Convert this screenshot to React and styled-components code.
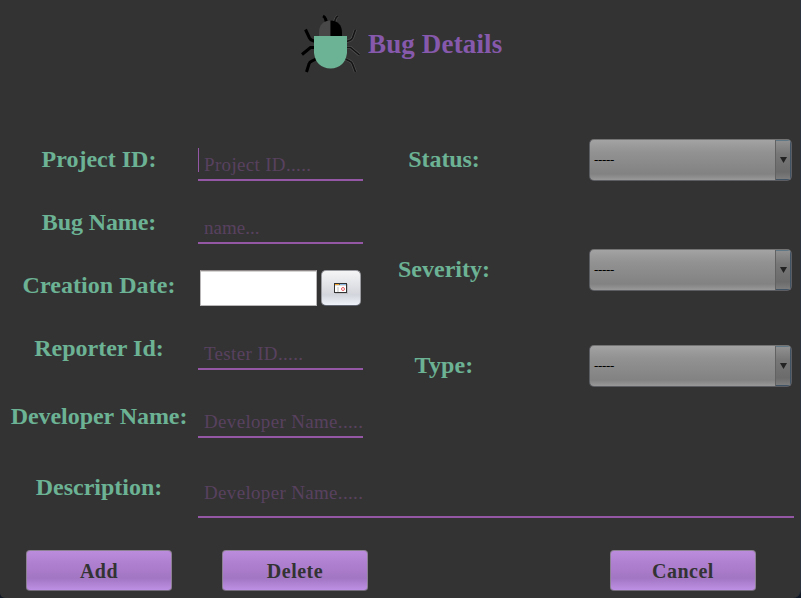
import React from 'react';
import styled, { createGlobalStyle } from 'styled-components';

const Global = createGlobalStyle`
  * { box-sizing: border-box; }
  body { margin: 0; background: #111826; overflow: hidden; }
`;

const Window = styled.main`
  width: 801px;
  height: 598px;
  background: #333333;
  border-right: 1px solid #2b323b;
  border-radius: 0 0 8px 5px;
  font-family: 'Liberation Serif', 'Times New Roman', serif;
  display: flex;
  flex-direction: column;
  overflow: hidden;
`;

const Header = styled.header`
  height: 128px;
  padding: 13px 0 0 300px;
  display: flex;
  align-items: flex-start;
  gap: 7px;
`;

const Title = styled.h1`
  margin: 0;
  padding-left: 1px;
  color: #8659ac;
  font-size: 27px;
  font-weight: bold;
  line-height: 63px;
  letter-spacing: 0.15px;
  white-space: nowrap;
`;

const Columns = styled.div`
  display: grid;
  grid-template-columns: 363px 1fr;
  height: 325px;
`;

const Column = styled.div`
  display: flex;
  flex-direction: column;
`;

const Row = styled.div`
  display: grid;
  grid-template-columns: ${(p) => p.$cols || '198px 165px'};
  column-gap: ${(p) => p.$columnGap || 0}px;
  height: ${(p) => p.$height || 63}px;
  flex: none;
  margin-top: ${(p) => p.$gap || 0}px;
`;

const Label = styled.label`
  color: #6cb294;
  font-size: 24px;
  font-weight: bold;
  line-height: 63px;
  text-align: center;
  white-space: nowrap;
  letter-spacing: ${(p) => p.$track || 0}px;
`;

const Field = styled.div`
  height: ${(p) => p.$height || 33}px;
  margin-top: 20px;
  border-bottom: 2px solid #9457a6;
  display: flex;
  align-items: flex-start;
`;

const Caret = styled.span`
  width: 1px;
  height: 24px;
  margin-right: -1px;
  background: #9457a6;
`;

const Placeholder = styled.span`
  padding-left: 6px;
  color: #58415f;
  font-size: 19px;
  line-height: 33px;
  white-space: nowrap;
  letter-spacing: ${(p) => p.$track ?? 0.33}px;
`;

const DatePicker = styled.div`
  display: flex;
  gap: 4px;
  padding: 16px 0 0 2px;
`;

const DateInput = styled.div`
  width: 117px;
  height: 36px;
  background: #ffffff;
  border: 1px solid #b9b7b7;
  border-top-color: #8f8989;
  box-shadow: inset 0 1px 0 #d6d3d3;
`;

const DateButton = styled.button`
  width: 40px;
  height: 36px;
  padding: 0;
  border: 1px solid #9a9ba1;
  border-bottom-color: #626671;
  border-radius: 5px;
  background: linear-gradient(#f5f5f6 0%, #e2e3e7 40%, #d3d5dc 70%, #f0f2fa 100%);
  display: grid;
  place-items: center;
`;

const Select = styled.div`
  width: 203px;
  height: 42px;
  margin-top: 11px;
  border: 1px solid #5b5d63;
  border-top-color: #747474;
  border-radius: 5px;
  background: linear-gradient(#a3a3a3 0%, #929292 30%, #828282 85%, #999999 100%);
  display: grid;
  grid-template-columns: 1fr 16px;
  overflow: hidden;
`;

const Value = styled.span`
  padding-left: 4px;
  color: #000000;
  font-size: 13px;
  line-height: 40px;
  letter-spacing: -0.33px;
`;

const Arrow = styled.span`
  border-left: 1px solid #626262;
  box-shadow: inset 0 1px 0 #607886, inset -1px -1px 0 #405365;
  background: linear-gradient(#929292 0%, #777777 35%, #6b6b6b 80%, #808080 100%);
  display: grid;
  place-items: center;
`;

const Actions = styled.footer`
  display: flex;
  padding: 28px 0 0 26px;
`;

const ActionButton = styled.button`
  width: 146px;
  height: 41px;
  padding: 2px 0 0;
  margin-left: ${(p) => p.$gap || 0}px;
  border: 1px solid #8c8192;
  border-bottom-color: #716978;
  border-radius: 4px;
  background: linear-gradient(#bb8bdd 0%, #b080d0 30%, #a276c3 70%, #be90e5 100%);
  color: #333333;
  font: bold 20px 'Liberation Serif', 'Times New Roman', serif;
  letter-spacing: 0.5px;
`;

function BugIcon() {
  return (
    <svg width="60" height="62" viewBox="0 0 60 62" aria-hidden="true">
      <g fill="none">
        <path d="M5.500 16.500l4 8.500q1 2 3 2.500l3 1M2 41.500l8.500-7H18M6.500 59l2.500-8q.5-2 3-3l5-2.500M23 3q2 1 2.500 3l1 3" stroke="#000" strokeWidth="3" />
        <path d="M55.500 16.500l-3 8.500q-1 2-3 2.500l-3 1M59.500 42l-9-7.500H43M55.500 59l-3-8q-.5-2-3-3l-5-2.500M38 3q-2 1-2.500 3l-1 3" stroke="#505050" strokeWidth="3" />
        <path d="M55.500 16.500l-3 8.500q-1 2-3 2.500l-3 1M59.500 42l-9-7.500H43M55.500 59l-3-8q-.5-2-3-3l-5-2.500M38 3q-2 1-2.500 3l-1 3" stroke="#141414" strokeWidth="1.600" />
      </g>
      <path d="M19 24v-4Q19 8 30.500 7.500V24Z" fill="#484848" />
      <path d="M30.500 7.500Q42 8 42 20v4H30.500Z" fill="#000" />
      <path d="M14 23h33v17Q45 55 30.500 55.500Q16 55 14 40Z" fill="#6cb294" />
    </svg>
  );
}

function CalendarIcon() {
  return (
    <svg width="14" height="11" viewBox="0 0 14 11" shapeRendering="crispEdges" aria-hidden="true">
      <path d="M1 1h13v10H1z" fill="#bfc0c6" />
      <path d="M0 0h13v10H0z" fill="#333" />
      <path d="M1 1h11v8H1z" fill="#fff" />
      <path d="M1 1h4v1H1z" fill="#f3a52e" />
      <path d="M5 1h1v1H5z" fill="#665" />
      <path d="M6 1h6v1H6z" fill="#8dbbe4" />
      <path d="M1 2h11v1H1zM3 4h2v5H3z" fill="#dedede" />
      <circle cx="9" cy="6" r="1.500" fill="none" stroke="#e45b60" shapeRendering="auto" />
    </svg>
  );
}

function TextField({ caret, track, height, children }) {
  return (
    <Field $height={height}>
      {caret && <Caret />}
      <Placeholder $track={track}>{children}</Placeholder>
    </Field>
  );
}

function Choice({ label, gap, track }) {
  return (
    <Row $cols="162px 203px" $columnGap={64} $gap={gap}>
      <Label $track={track}>{label}</Label>
      <Select>
        <Value>-----</Value>
        <Arrow>
          <svg width="7" height="6" viewBox="0 0 7 6"><path d="M0 0h7L3.500 6z" fill="#222" /></svg>
        </Arrow>
      </Select>
    </Row>
  );
}

export default function App() {
  return (
    <>
      <Global />
      <Window>
        <Header>
          <BugIcon />
          <Title>Bug Details</Title>
        </Header>
        <Columns>
          <Column>
            <Row><Label>Project ID:</Label><TextField caret>Project ID.....</TextField></Row>
            <Row><Label $track={-0.1}>Bug Name:</Label><TextField track={0}>name...</TextField></Row>
            <Row>
              <Label $track={0.05}>Creation Date:</Label>
              <DatePicker>
                <DateInput />
                <DateButton aria-label="Choose date"><CalendarIcon /></DateButton>
              </DatePicker>
            </Row>
            <Row><Label>Reporter Id:</Label><TextField>Tester ID.....</TextField></Row>
            <Row $gap={5}><Label $track={-0.05}>Developer Name:</Label><TextField>Developer Name.....</TextField></Row>
          </Column>
          <Column>
            <Choice label="Status:" track={-0.1} />
            <Choice label="Severity:" gap={47} />
            <Choice label="Type:" gap={33} track={0.15} />
          </Column>
        </Columns>
        <Row $cols="198px 596px" $height={66} $gap={3}>
          <Label>Description:</Label>
          <TextField height={42}>Developer Name.....</TextField>
        </Row>
        <Actions>
          <ActionButton>Add</ActionButton>
          <ActionButton $gap={50}>Delete</ActionButton>
          <ActionButton $gap={242}>Cancel</ActionButton>
        </Actions>
      </Window>
    </>
  );
}
